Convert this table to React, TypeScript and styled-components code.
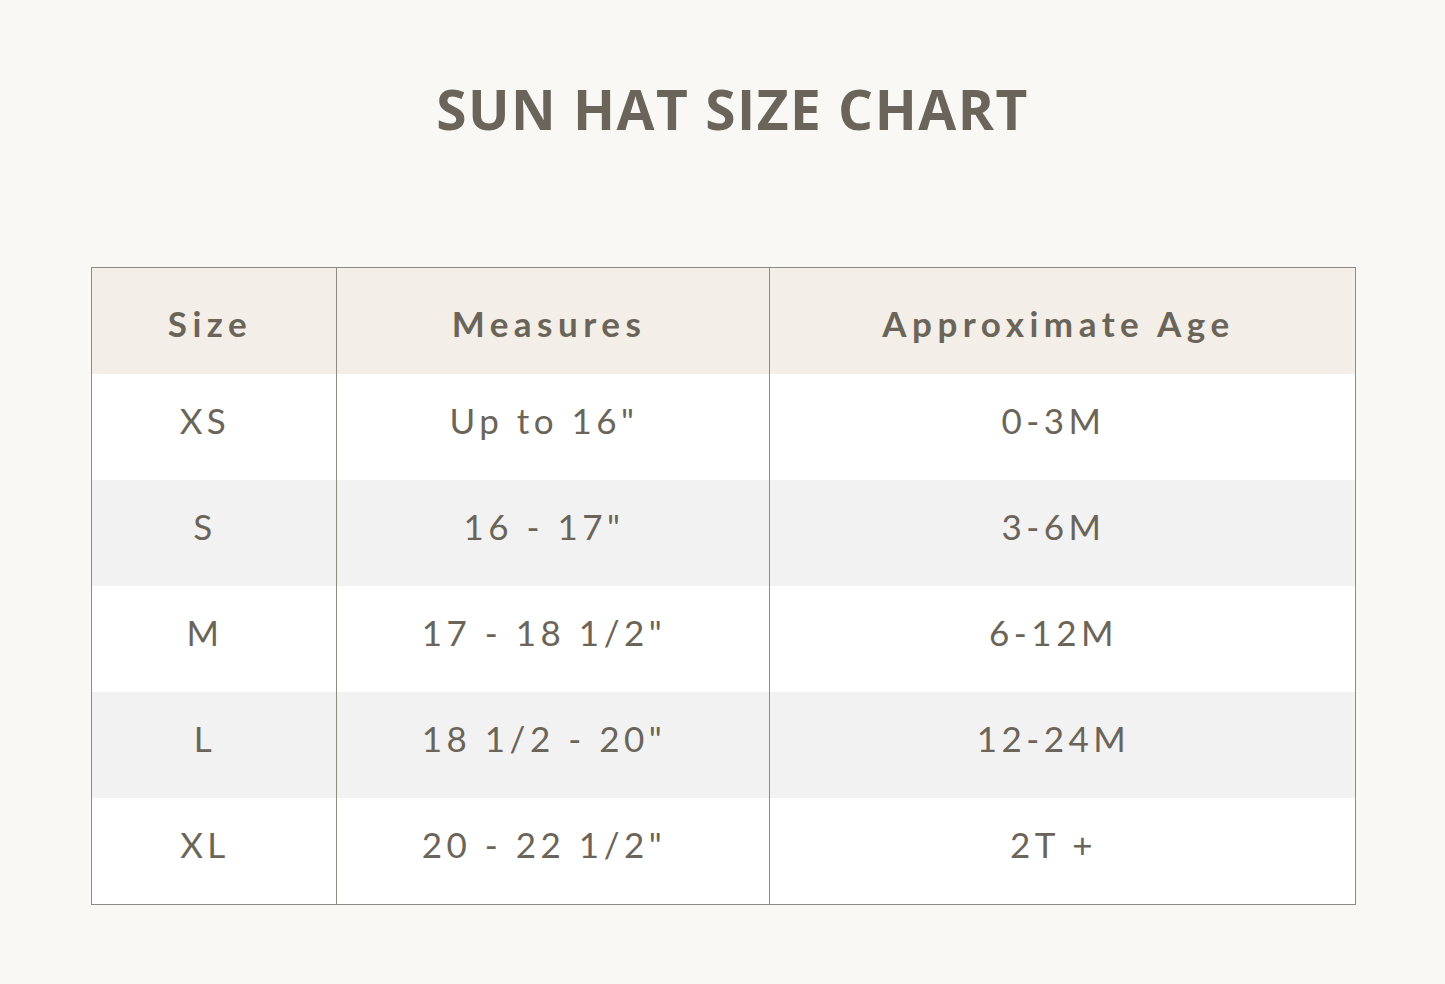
import styled, { createGlobalStyle } from "styled-components";

const rows = [
  { size: "XS", measures: "Up to 16\"", age: "0-3M" },
  { size: "S", measures: "16 - 17\"", age: "3-6M" },
  { size: "M", measures: "17 - 18 1/2\"", age: "6-12M" },
  { size: "L", measures: "18 1/2 - 20\"", age: "12-24M" },
  { size: "XL", measures: "20 - 22 1/2\"", age: "2T +" },
];

const GlobalStyle = createGlobalStyle`
  html, body {
    margin: 0;
    background: #f9f8f4;
  }
`;

const App = () => {
  return (
    <Page>
      <GlobalStyle />
      <Title>SUN HAT SIZE CHART</Title>
      <Chart>
        <HeadCell>Size</HeadCell>
        <HeadCell $divider>Measures</HeadCell>
        <HeadCell $divider>Approximate Age</HeadCell>
        {rows.map((row, i) => (
          <Row key={row.size} $striped={i % 2 === 1}>
            <Cell>{row.size}</Cell>
            <Cell $divider>{row.measures}</Cell>
            <Cell $divider>{row.age}</Cell>
          </Row>
        ))}
      </Chart>
    </Page>
  );
};
export default App;

const Page = styled.div`
  min-height: 984px;
  box-sizing: border-box;
  padding: 78px 0 0 91px;
  display: flex;
  flex-direction: column;
  align-items: flex-start;
  font-family: Lato, "Open Sans", sans-serif;
  color: #6b6459;
`;

const Title = styled.h1`
  align-self: stretch;
  margin: 0 91px 0 0;
  padding-left: 20px;
  text-align: center;
  font-family: "Open Sans", sans-serif;
  font-size: 55px;
  font-weight: 700;
  line-height: 62px;
  letter-spacing: 1.5px;
  color: #6b645a;
`;

const Chart = styled.div`
  margin-top: 127px;
  width: 1265px;
  box-sizing: border-box;
  border: 1px solid #8e8b84;
  display: grid;
  grid-template-columns: 244px 433px 1fr;
  grid-auto-rows: 106px;
`;

const Row = styled.div<{ $striped?: boolean }>`
  display: contents;

  & > div {
    background: ${(p) => (p.$striped ? "#f2f2f2" : "#ffffff")};
  }
`;

const HeadCell = styled.div<{ $divider?: boolean }>`
  display: flex;
  align-items: center;
  justify-content: center;
  padding-right: 8px;
  padding-top: 4px;
  background: #f3efe8;
  border-left: ${(p) => (p.$divider ? "1px solid #8e8b84" : "none")};
  font-size: 35px;
  font-weight: 700;
  letter-spacing: 5.5px;
  white-space: pre;
`;

const Cell = styled.div<{ $divider?: boolean }>`
  display: flex;
  align-items: center;
  justify-content: center;
  padding-right: 18px;
  padding-bottom: 15px;
  border-left: ${(p) => (p.$divider ? "1px solid #8e8b84" : "none")};
  font-size: 35px;
  font-weight: 400;
  letter-spacing: 4.5px;
  white-space: pre;
`;
